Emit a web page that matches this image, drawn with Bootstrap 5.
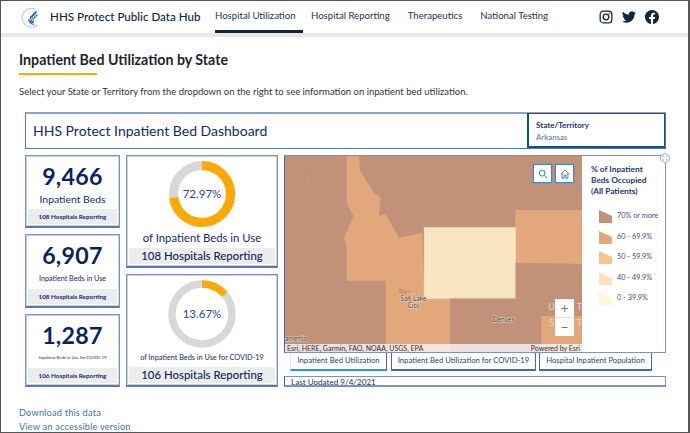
<!DOCTYPE html>
<html lang="en">
<head>
<meta charset="UTF-8">
<meta name="viewport" content="width=device-width, initial-scale=1.0">
<title>Inpatient Bed Utilization by State</title>
<link href="https://cdn.jsdelivr.net/npm/bootstrap@5.3.3/dist/css/bootstrap.min.css" rel="stylesheet">
<style>
    html, body { height: 100%; }
    body { background: #fff; overflow: hidden; font-family: Lato, "Open Sans", sans-serif; color: #222; }
    .shot { width: 690px; height: 433px; border: 1px solid #555; border-right-width: 2px; overflow: hidden; }
    .hub-bar { height: 32px; padding-left: 20px; }
    .hub-bar > * { flex: none; }
    .hub-logo { width: 21px; height: 21px; margin-right: 8px; }
    .hub-name { font-size: 11.6px; font-weight: 500; color: #10263d; width: 165px; white-space: nowrap; }
    .hub-link { font-size: 9.6px; color: #1b3550; height: 32px; line-height: 30px; white-space: nowrap; text-decoration: none; }
    .hub-active { width: 88px; border-bottom: 3px solid #10263d; }
    .hub-next { margin-left: 8px; }
    .hub-gap { margin-left: 18px; }
    .hub-social { margin-left: 51px; gap: 9px; }
    .hub-social svg { width: 14px; height: 14px; display: block; }
    .hub-rule { height: 4px; background: #e8e8e8; }
    .page-body { padding: 13px 22px 0 18px; }
    .page-title { font-size: 14.2px; font-weight: 700; color: #1b2430; margin: 0; line-height: 20px; }
    .title-bar { width: 78px; height: 2px; background: #ffa800; margin-top: 3px; }
    .page-intro { font-size: 9.5px; color: #333; margin: 11px 0 0; line-height: 12px; }
    .dash { margin: 14px 0 0 6px; }
    .dash-head { height: 37px; border: 1px solid #5c76ac; border-top: 2px solid #8fa2c8; }
    .dash-title { font-size: 14px; color: #0f2a6b; padding-left: 7px; line-height: 34px; }
    .state-box { width: 138px; border: 2px solid #0b4f9e; border-top-width: 1px; border-right-width: 1px; padding: 5px 7px 0; margin-top: -1px; }
    .state-label { font-size: 8px; font-weight: 700; color: #1a3375; line-height: 12px; }
    .state-value { font-size: 7.9px; color: #5a70a4; line-height: 12px; }
    .dash-grid { display: grid; grid-template-columns: 95px 152px 382px; gap: 6px; margin-top: 6px; height: 232px; }
    .dash-col { display: flex; flex-direction: column; gap: 6px; }
    .tile { flex: 1; min-height: 0; border: 1px solid #7d92c0; border-bottom: 2px solid #6078ae; box-shadow: inset 0 0 0 1px #c8d2e6; background: #fff; display: flex; flex-direction: column; align-items: center; padding: 2px; color: #0f2a6b; }
    .tile-num { font-size: 23.2px; font-weight: 700; line-height: 28px; margin-top: 4px; color: #0b1f66; letter-spacing: .3px; }
    .tile-label { flex: 1; display: flex; align-items: center; text-align: center; white-space: nowrap; }
    .tile-foot { width: 100%; background: #ececec; text-align: center; font-size: 6.3px; line-height: 15px; font-weight: 700; }
    .tile-foot-big { font-size: 11.4px; line-height: 16px; font-weight: 500; color: #0e2558; }
    .ring-wrap { position: relative; width: 70px; height: 70px; margin-top: 1px; flex: none; }
    .ring-low { margin-top: 2px; }
    .ring-wrap svg { width: 70px; height: 70px; display: block; }
    .ring-text { position: absolute; inset: 0; display: flex; align-items: center; justify-content: center; font-size: 11.5px; color: #2c4688; }
    .map-frame { position: relative; height: 198px; border: 1px solid #7d92c0; border-left-color: #4a63a0; display: flex; }
    .map-canvas { position: relative; width: 297px; flex: none; overflow: hidden; }
    .map-canvas > svg { width: 297px; height: 196px; display: block; }
    .map-btn { position: absolute; width: 19px; height: 19px; top: 8px; background: #fff; border: 1px solid #3c8bc7; box-shadow: 0 0 1px rgba(0,0,0,.3); display: flex; align-items: center; justify-content: center; }
    .map-btn svg { width: 10px; height: 10px; }
    .zoom-box { position: absolute; left: 270px; top: 143px; width: 19px; height: 37px; background: #fff; color: #777; font-size: 14px; line-height: 18px; text-align: center; }
    .zoom-box div + div { border-top: 1px solid #ddd; }
    .map-credit { position: absolute; left: 0; right: 0; bottom: 0; height: 8px; background: rgba(255,255,255,.72); font-size: 7px; line-height: 8px; padding: 0 2px; display: flex; justify-content: space-between; color: #333; white-space: nowrap; }
    .legend { padding: 8px 0 0 9px; color: #1a3375; }
    .legend-title { font-size: 8.3px; font-weight: 700; line-height: 10.8px; margin-bottom: 10px; }
    .legend-row { display: flex; align-items: center; height: 20.5px; font-size: 7.3px; color: #3c4f7e; padding-left: 8px; white-space: nowrap; }
    .legend-row svg { width: 13px; height: 13px; margin-right: 5px; }
    .expand-dot { position: absolute; right: -5px; top: -3px; width: 10px; height: 10px; }
    .expand-dot svg { display: block; width: 10px; height: 10px; }
    .tab-row { display: flex; gap: 3px; height: 18px; padding-left: 6px; }
    .tab-item { font-size: 7.7px; color: #1f4283; background: #fff; border: 1px solid #4d67a3; border-top: 0; border-bottom-width: 2px; line-height: 15px; text-align: center; white-space: nowrap; }
    .tab-on { width: 97px; border-bottom-color: #2f94d6; border-left-color: #dfe5f0; }
    .tab-two { width: 145px; margin-left: 1px; }
    .tab-three { width: 113px; }
    .updated { height: 11px; margin-top: 5px; border: 1px solid #7d92c0; border-top-width: 1.5px; border-bottom-width: 2px; border-left-color: #4a63a0; font-size: 8.1px; line-height: 11px; color: #1a3375; padding-left: 6px; overflow: hidden; }
    .data-links { margin-top: 19px; font-size: 9.2px; line-height: 14px; letter-spacing: .2px; }
    .data-links a { display: block; color: #3f74a3; text-decoration: none; }
</style>
</head>
<body>
<div class="shot">
    <nav class="hub-bar d-flex align-items-center">
        <svg class="hub-logo" viewBox="0 0 20 20" fill="none">
            <path d="M14 2.200A9 9 0 1 0 16 17" stroke="#b9c5dd" stroke-width="1"/>
            <path d="M7 13l8-8.500M8 15l8-8M9.500 16l3-3M9 10l5-5.500M8.500 13l3.500 4" stroke="#2f5da3" stroke-width="1.700" stroke-dasharray="1.500 .7"/>
        </svg>
        <span class="hub-name">HHS Protect Public Data Hub</span>
        <a class="hub-link hub-active" href="#">Hospital Utilization</a>
        <a class="hub-link hub-next" href="#">Hospital Reporting</a>
        <a class="hub-link hub-gap" href="#">Therapeutics</a>
        <a class="hub-link hub-gap" href="#">National Testing</a>
        <div class="hub-social d-flex align-items-center">
            <svg viewBox="0 0 24 24" fill="none" stroke="#10263d" stroke-width="2.200"><rect x="2" y="2" width="20" height="20" rx="5.500"/><circle cx="12" cy="12" r="4.800"/><circle cx="17.800" cy="6.200" r=".8" fill="#10263d" stroke-width="1"/></svg>
            <svg viewBox="0 0 24 24" fill="#10263d"><path d="M23.950 4.570a10 10 0 0 1-2.820.77 4.960 4.960 0 0 0 2.160-2.720 9.900 9.900 0 0 1-3.130 1.180 4.920 4.920 0 0 0-8.380 4.480A13.930 13.930 0 0 1 1.670 3.150a4.920 4.920 0 0 0 1.520 6.570 4.900 4.900 0 0 1-2.230-.62v.06a4.920 4.920 0 0 0 3.950 4.830 4.990 4.990 0 0 1-2.210.08 4.940 4.940 0 0 0 4.600 3.420A9.870 9.870 0 0 1 0 19.540a14 14 0 0 0 7.560 2.210c9.050 0 14-7.500 14-13.980 0-.21 0-.42-.02-.63a9.940 9.940 0 0 0 2.410-2.570z"/></svg>
            <svg viewBox="0 0 24 24" fill="#10263d"><path d="M24 12.070C24 5.400 18.630 0 12 0S0 5.400 0 12.070c0 6.030 4.390 11.020 10.130 11.930v-8.440H7.080v-3.490h3.050V9.410c0-3.030 1.790-4.700 4.530-4.700 1.310 0 2.680.23 2.680.23v2.970h-1.510c-1.490 0-1.960.93-1.960 1.880v2.280h3.330l-.53 3.490h-2.800V24C19.610 23.090 24 18.100 24 12.070z"/></svg>
        </div>
    </nav>
    <div class="hub-rule"></div>
    <main class="page-body">
        <h1 class="page-title">Inpatient Bed Utilization by State</h1>
        <div class="title-bar"></div>
        <p class="page-intro">Select your State or Territory from the dropdown on the right to see information on inpatient bed utilization.</p>
        <div class="dash">
            <div class="dash-head d-flex justify-content-between">
                <div class="dash-title">HHS Protect Inpatient Bed Dashboard</div>
                <div class="state-box">
                    <div class="state-label">State/Territory</div>
                    <div class="state-value">Arkansas</div>
                </div>
            </div>
            <div class="dash-grid">
                <div class="dash-col">
                    <div class="tile">
                        <div class="tile-num">9,466</div>
                        <div class="tile-label" style="font-size:10.4px">Inpatient Beds</div>
                        <div class="tile-foot">108 Hospitals Reporting</div>
                    </div>
                    <div class="tile">
                        <div class="tile-num">6,907</div>
                        <div class="tile-label" style="font-size:7.2px">Inpatient Beds in Use</div>
                        <div class="tile-foot">108 Hospitals Reporting</div>
                    </div>
                    <div class="tile">
                        <div class="tile-num">1,287</div>
                        <div class="tile-label" style="font-size:4.3px">Inpatient Beds in Use for COVID-19</div>
                        <div class="tile-foot">106 Hospitals Reporting</div>
                    </div>
                </div>
                <div class="dash-col">
                    <div class="tile">
                        <div class="ring-wrap">
                            <svg viewBox="0 0 70 70" fill="none">
                                <circle cx="35" cy="35" r="28.500" stroke="#d8d8d8" stroke-width="9"/>
                                <circle cx="35" cy="35" r="28.500" stroke="#ffa800" stroke-width="9" pathLength="100" stroke-dasharray="72.97 100" transform="rotate(-90 35 35)"/>
                            </svg>
                            <div class="ring-text">72.97%</div>
                        </div>
                        <div class="tile-label" style="font-size:11.3px">of Inpatient Beds in Use</div>
                        <div class="tile-foot tile-foot-big">108 Hospitals Reporting</div>
                    </div>
                    <div class="tile">
                        <div class="ring-wrap ring-low">
                            <svg viewBox="0 0 70 70" fill="none">
                                <circle cx="35" cy="35" r="30" stroke="#d8d8d8" stroke-width="7.500"/>
                                <circle cx="35" cy="35" r="30" stroke="#ffa800" stroke-width="7.500" pathLength="100" stroke-dasharray="13.67 100" transform="rotate(-90 35 35)"/>
                            </svg>
                            <div class="ring-text">13.67%</div>
                        </div>
                        <div class="tile-label" style="font-size:7.3px">of Inpatient Beds in Use for COVID-19</div>
                        <div class="tile-foot tile-foot-big">106 Hospitals Reporting</div>
                    </div>
                </div>
                <div>
                    <div class="map-frame">
                        <div class="map-canvas">
                            <svg viewBox="3 15 891 588">
                                <rect x="0" y="0" width="900" height="630" fill="#c1917a"/>
                                <path d="M188 15H225L228 60 270 125 290 140 285 195 305 190 345 260 415 245 420 390H188V290L180 262 208 195 188 155Z" fill="#e3a77c"/>
                                <path d="M694 177H894V338L694 335Z" fill="#e3a77c"/>
                                <path d="M305 390H420V442H498V610H305Z" fill="#e3a77c"/>
                                <path d="M772 495H894V610H772Z" fill="#e3a77c"/>
                                <path d="M421 230H694V442H421Z" fill="#f6e5bf" stroke="#fbf0d8" stroke-width="2"/>
                                <path d="M694 15V177M694 335V442H772V495M498 442H772M3 172H188M3 390H305M70 390V610" fill="none" stroke="#cb9c86" stroke-width="1.500"/>
                                <path d="M58 55Q90 50 85 80L75 135 110 165 45 190" fill="none" stroke="#b58570" stroke-width="2" stroke-dasharray="3 5"/>
                                <path d="M345 410l18 8 16 2-14 12-20-6z" fill="#d1946c"/>
                                <g font-size="20" text-anchor="middle" fill="#4b3a33" stroke="#f2dccb" stroke-width="3" paint-order="stroke" font-family="Lato, sans-serif">
                                    <text x="388" y="449">Salt Lake</text>
                                    <text x="388" y="471">City</text>
                                    <text x="658" y="512">Denver</text>
                                    <text x="36" y="571">amento</text>
                                </g>
                                <g font-size="26" text-anchor="middle" fill="#f0d9c9" font-family="Lato, sans-serif">
                                    <text x="802" y="477">U</text>
                                    <text x="886" y="477">T</text>
                                    <text x="802" y="525">S</text>
                                    <text x="886" y="525">T</text>
                                </g>
                            </svg>
                            <div class="map-btn" style="left:248px"><svg viewBox="0 0 12 12" fill="none" stroke="#2f7fbd" stroke-width="1.200"><circle cx="5" cy="5" r="3.500"/><path d="M7.500 7.500L11 11"/></svg></div>
                            <div class="map-btn" style="left:270px"><svg viewBox="0 0 12 12" fill="none" stroke="#2f7fbd" stroke-width="1.100"><path d="M1.500 6L6 1l4.500 5M2.500 5v6H5V7.500h2V11h2.500V5"/></svg></div>
                            <div class="zoom-box"><div>+</div><div>−</div></div>
                            <div class="map-credit"><span>Esri, HERE, Garmin, FAO, NOAA, USGS, EPA</span><span>Powered by Esri</span></div>
                        </div>
                        <div class="legend">
                            <div class="legend-title">% of Inpatient<br>Beds Occupied<br>(All Patients)</div>
                            <div class="legend-row"><svg viewBox="0 0 13 13"><path d="M0 0L13 6V13H0Z" fill="#c1917a"/></svg>70% or more</div>
                            <div class="legend-row"><svg viewBox="0 0 13 13"><path d="M0 0L13 6V13H0Z" fill="#e3a77c"/></svg>60 - 69.9%</div>
                            <div class="legend-row"><svg viewBox="0 0 13 13"><path d="M0 0L13 6V13H0Z" fill="#f8c48c"/></svg>50 - 59.9%</div>
                            <div class="legend-row"><svg viewBox="0 0 13 13"><path d="M0 0L13 6V13H0Z" fill="#fbe4bd"/></svg>40 - 49.9%</div>
                            <div class="legend-row"><svg viewBox="0 0 13 13"><path d="M0 0L13 6V13H0Z" fill="#fdf7d8"/></svg>0 - 39.9%</div>
                        </div>
                        <div class="expand-dot">
                            <svg viewBox="0 0 10 10" fill="#fff" stroke="#9a9a9a" stroke-width=".8"><circle cx="5" cy="5" r="4.500"/><path d="M2.800 4V2.800H4M6 2.800h1.200V4M7.200 6v1.200H6M4 7.200H2.800V6" fill="none"/></svg>
                        </div>
                    </div>
                    <div class="tab-row">
                        <div class="tab-item tab-on">Inpatient Bed Utilization</div>
                        <div class="tab-item tab-two">Inpatient Bed Utilization for COVID-19</div>
                        <div class="tab-item tab-three">Hospital Inpatient Population</div>
                    </div>
                    <div class="updated">Last Updated 9/4/2021</div>
                </div>
            </div>
        </div>
        <div class="data-links">
            <a href="#">Download this data</a>
            <a href="#">View an accessible version</a>
        </div>
    </main>
</div>
<script src="https://cdn.jsdelivr.net/npm/bootstrap@5.3.3/dist/js/bootstrap.bundle.min.js"></script>
</body>
</html>
